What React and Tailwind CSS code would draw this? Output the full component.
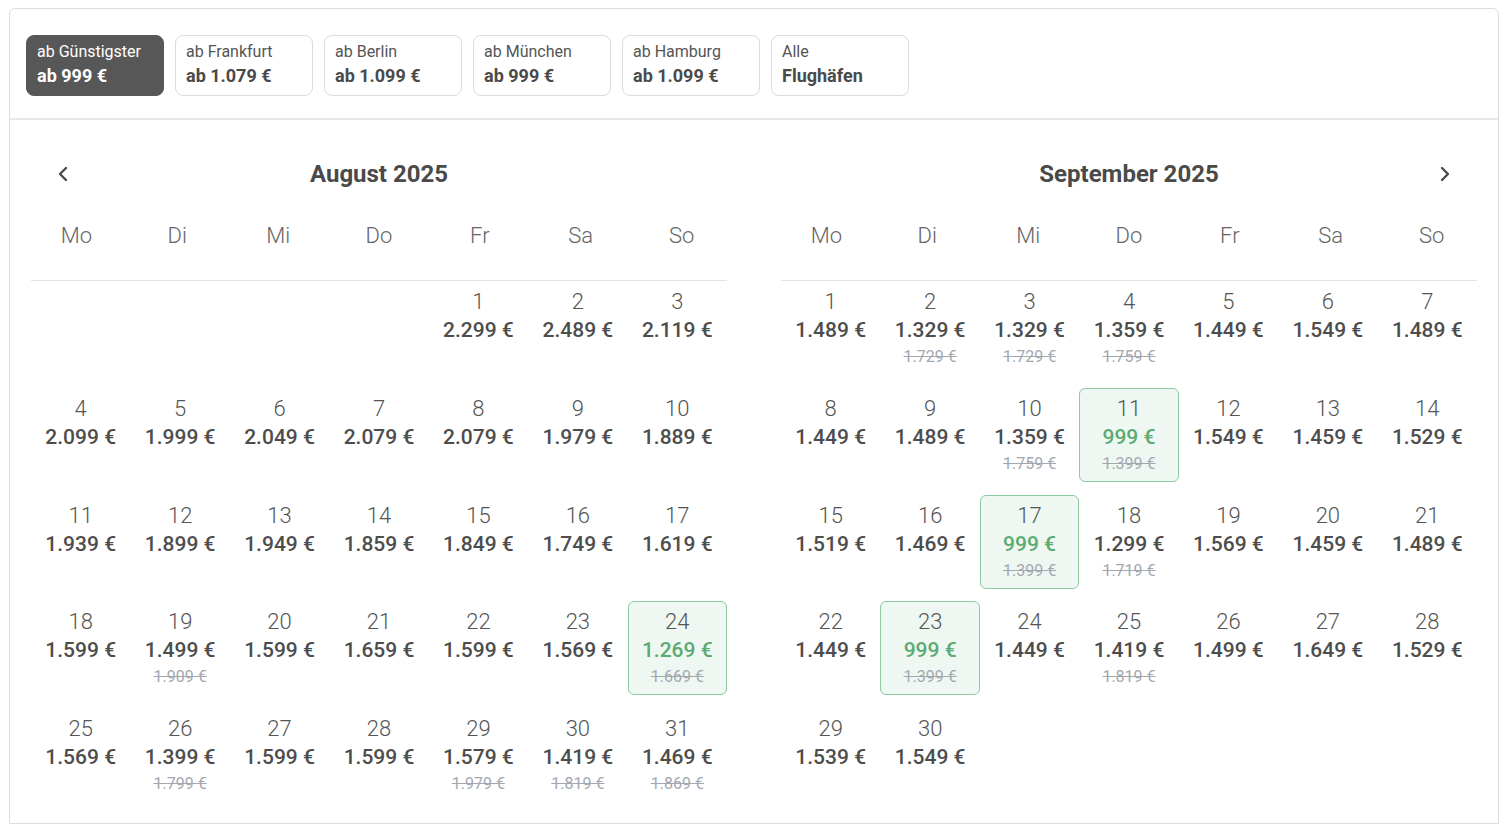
import React from 'react';

const airports = [
  { label: 'ab Günstigster', price: 'ab 999 €', active: true },
  { label: 'ab Frankfurt', price: 'ab 1.079 €' },
  { label: 'ab Berlin', price: 'ab 1.099 €' },
  { label: 'ab München', price: 'ab 999 €' },
  { label: 'ab Hamburg', price: 'ab 1.099 €' },
  { label: 'Alle', price: 'Flughäfen' },
];

const weekdays = ['Mo', 'Di', 'Mi', 'Do', 'Fr', 'Sa', 'So'];

// [day, price, oldPrice, highlighted]
const august = {
  offset: 4,
  days: [
    [1, '2.299 €'], [2, '2.489 €'], [3, '2.119 €'],
    [4, '2.099 €'], [5, '1.999 €'], [6, '2.049 €'], [7, '2.079 €'], [8, '2.079 €'], [9, '1.979 €'], [10, '1.889 €'],
    [11, '1.939 €'], [12, '1.899 €'], [13, '1.949 €'], [14, '1.859 €'], [15, '1.849 €'], [16, '1.749 €'], [17, '1.619 €'],
    [18, '1.599 €'], [19, '1.499 €', '1.909 €'], [20, '1.599 €'], [21, '1.659 €'], [22, '1.599 €'], [23, '1.569 €'], [24, '1.269 €', '1.669 €', true],
    [25, '1.569 €'], [26, '1.399 €', '1.799 €'], [27, '1.599 €'], [28, '1.599 €'], [29, '1.579 €', '1.979 €'], [30, '1.419 €', '1.819 €'], [31, '1.469 €', '1.869 €'],
  ],
};

const september = {
  offset: 0,
  days: [
    [1, '1.489 €'], [2, '1.329 €', '1.729 €'], [3, '1.329 €', '1.729 €'], [4, '1.359 €', '1.759 €'], [5, '1.449 €'], [6, '1.549 €'], [7, '1.489 €'],
    [8, '1.449 €'], [9, '1.489 €'], [10, '1.359 €', '1.759 €'], [11, '999 €', '1.399 €', true], [12, '1.549 €'], [13, '1.459 €'], [14, '1.529 €'],
    [15, '1.519 €'], [16, '1.469 €'], [17, '999 €', '1.399 €', true], [18, '1.299 €', '1.719 €'], [19, '1.569 €'], [20, '1.459 €'], [21, '1.489 €'],
    [22, '1.449 €'], [23, '999 €', '1.399 €', true], [24, '1.449 €'], [25, '1.419 €', '1.819 €'], [26, '1.499 €'], [27, '1.649 €'], [28, '1.529 €'],
    [29, '1.539 €'], [30, '1.549 €'],
  ],
};

const Chevron = ({ dir }) => (
  <svg width="14" height="16" viewBox="0 0 14 16" fill="none">
    <path
      d={dir === 'left' ? 'M10 2 L4 8 L10 14' : 'M4 2 L10 8 L4 14'}
      stroke="#4a4a4a"
      strokeWidth="2.4"
      strokeLinecap="round"
      strokeLinejoin="round"
    />
  </svg>
);

const DayCell = ({ day }) => {
  const [num, price, old, hl] = day;
  return (
    <div
      className={`h-[94px] flex flex-col items-center pt-[6px] rounded-md border ${
        hl ? 'bg-[#eef7f1] border-[#8ccb9f]' : 'border-transparent'
      }`}
    >
      <span className="text-[22px] leading-[28px] font-light text-[#555]">{num}</span>
      <span className={`text-[21px] leading-[28px] font-medium ${hl ? 'text-[#5aab72]' : 'text-[#4d4d4d]'}`}>
        {price}
      </span>
      {old && (
        <span className="mt-[3px] text-[16px] leading-[20px] text-[#a3a7b0] line-through">{old}</span>
      )}
    </div>
  );
};

const Month = ({ title, data, side }) => (
  <div className="w-[696px]">
    <div className="flex items-center pt-[38px]">
      <div className="w-[64px] flex justify-center">{side === 'left' && <Chevron dir="left" />}</div>
      <h2 className="flex-1 text-center text-[24px] leading-[32px] font-bold text-[#4a4a4a]">{title}</h2>
      <div className="w-[64px] flex justify-center">{side === 'right' && <Chevron dir="right" />}</div>
    </div>
    <div className="-mx-[5px] mt-[30px] grid grid-cols-7">
      {weekdays.map((w) => (
        <div key={w} className="text-center text-[22px] leading-[32px] font-light text-[#666]">
          {w}
        </div>
      ))}
    </div>
    <div className="mt-[28px] border-t border-[#e4e4e4]" />
    <div className="grid grid-cols-7 gap-y-[12.75px]">
      {Array.from({ length: data.offset }).map((_, i) => (
        <div key={`e${i}`} className="h-[94px]" />
      ))}
      {data.days.map((d) => (
        <DayCell key={d[0]} day={d} />
      ))}
    </div>
  </div>
);

export default function App() {
  return (
    <div className="bg-white min-h-[826px] pt-[8px] pl-[9px] pr-[5px]" style={{ fontFamily: 'Roboto, "Noto Sans", sans-serif' }}>
      <div className="w-[1490px] h-[816px] border border-[#dedede] rounded-t-md">
        <div className="flex gap-[11px] pt-[26px] pl-[16px] pb-[22px] border-b-2 border-[#e8e8ec]">
          {airports.map((a) => (
            <button
              key={a.label}
              className={`w-[138px] h-[61px] rounded-lg text-left px-[10px] pt-[6px] border ${
                a.active ? 'bg-[#575757] border-[#575757] text-white' : 'bg-white border-[#dcdcdc] text-[#4a4a4a]'
              } flex flex-col justify-start`}
            >
              <div className={`text-[16px] leading-[20px] ${a.active ? 'text-white' : 'text-[#555]'}`}>{a.label}</div>
              <div className="mt-[2px] text-[18px] leading-[24px] font-bold">{a.price}</div>
            </button>
          ))}
        </div>
        <div className="flex gap-[54px] pl-[21px]">
          <Month title="August 2025" data={august} side="left" />
          <Month title="September 2025" data={september} side="right" />
        </div>
      </div>
    </div>
  );
}
